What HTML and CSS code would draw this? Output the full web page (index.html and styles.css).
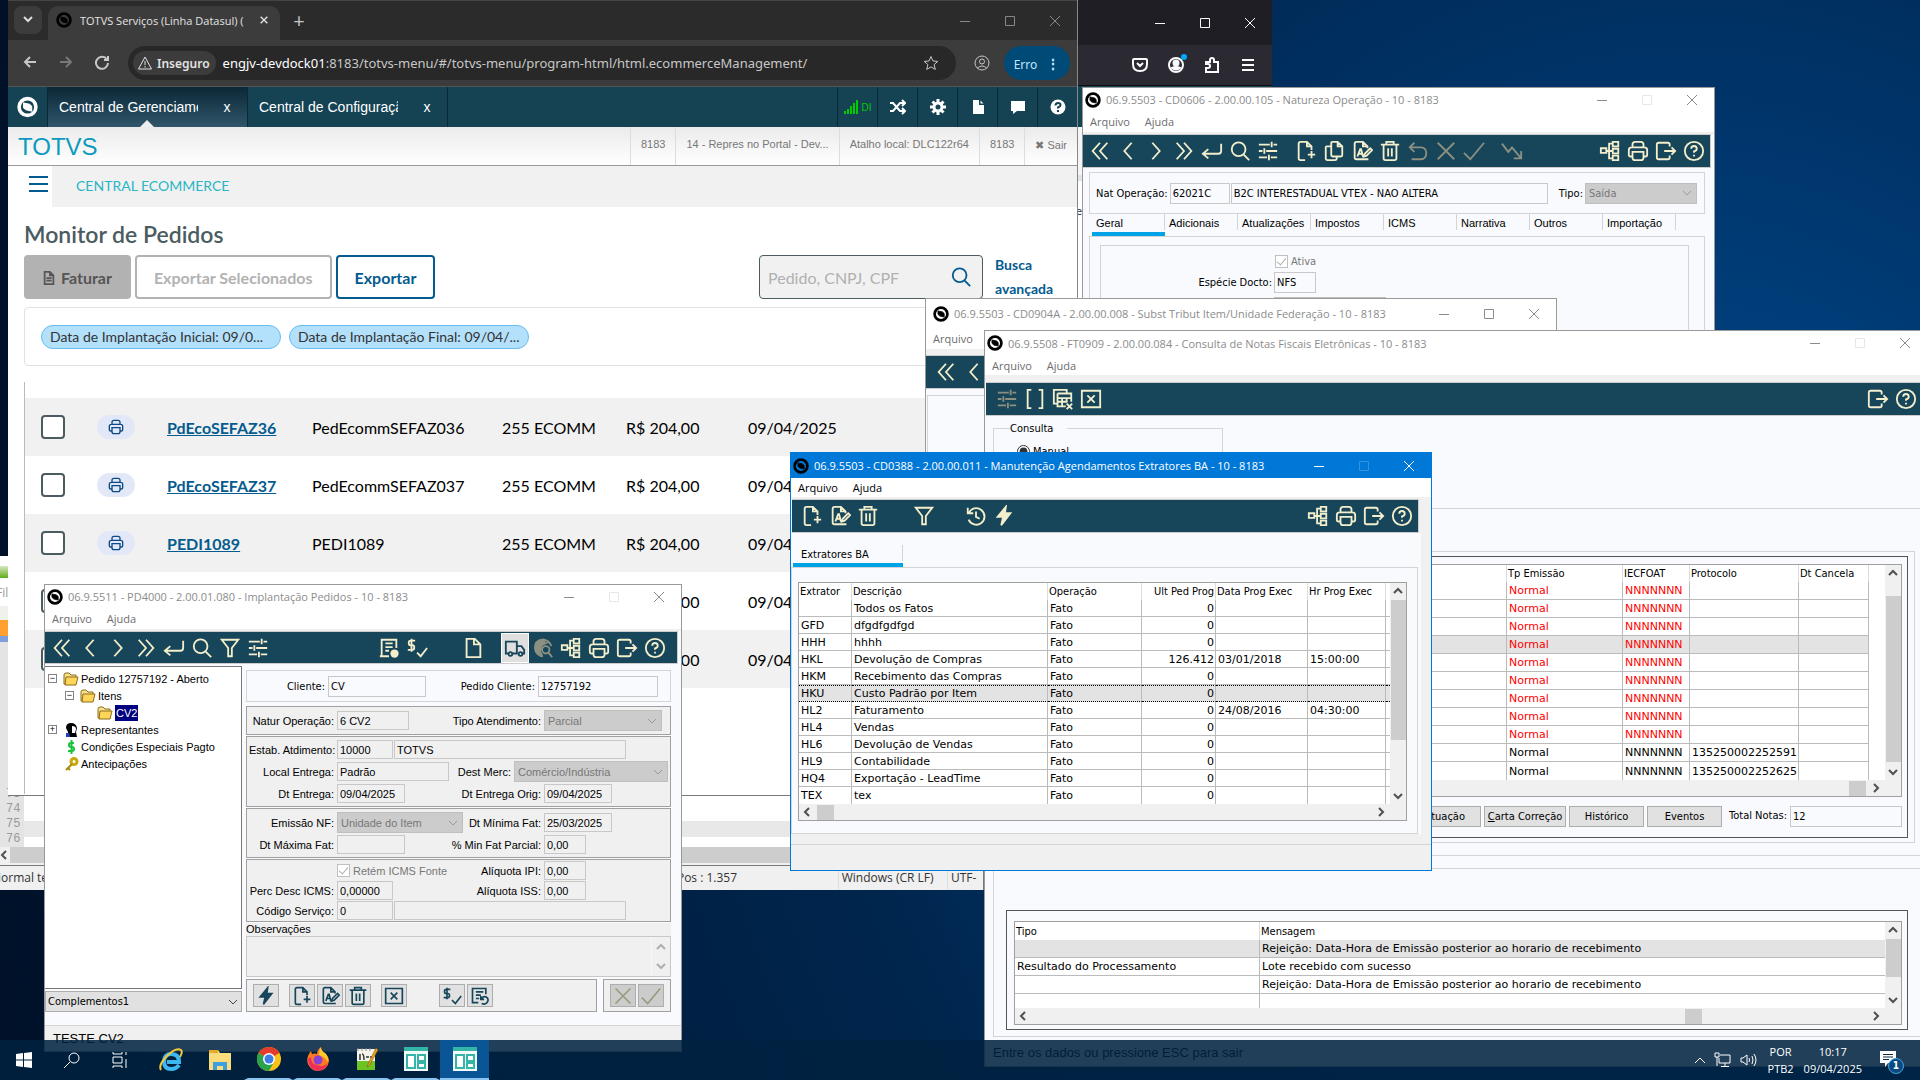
FILE: index.html
```
<!DOCTYPE html>
<html lang="pt-BR">
<head>
  <meta charset="utf-8">
  <meta name="viewport" content="width=device-width, initial-scale=1">
  <title>Central Ecommerce</title>
  <link rel="stylesheet" href="styles.css">
</head>
<body>

<!-- Icon sprite -->
<svg class="sprite" aria-hidden="true">
  <symbol id="logo" viewBox="0 0 20 20"><circle cx="10" cy="10" r="8" fill="none" stroke="currentColor" stroke-width="3.4"/><path d="M6.2 6.2l5.6 1.2 2.2 2v4.4L8.600 12.600 6.200 10.400z" fill="currentColor"/></symbol>
  <symbol id="first" viewBox="0 0 24 24"><path d="M12 3L4 12l8 9M20 3l-8 9 8 9"/></symbol>
  <symbol id="prev" viewBox="0 0 24 24"><path d="M16 3l-8 9 8 9"/></symbol>
  <symbol id="next" viewBox="0 0 24 24"><path d="M8 3l8 9-8 9"/></symbol>
  <symbol id="last" viewBox="0 0 24 24"><path d="M4 3l8 9-8 9M12 3l8 9-8 9"/></symbol>
  <symbol id="enter" viewBox="0 0 24 24"><path d="M22 4v8q0 3-3 3H3M8 10l-6 5 6 5"/></symbol>
  <symbol id="search" viewBox="0 0 24 24"><circle cx="10.500" cy="10" r="7.500"/><path d="M16 16l6 6"/></symbol>
  <symbol id="funnel" viewBox="0 0 24 24"><path d="M3 3h18l-7 9v9h-4v-9z"/></symbol>
  <symbol id="sliders" viewBox="0 0 24 24"><path d="M2 5h12M18 5h4M16 2v6M2 12h4M10 12h12M8 9v6M2 19h9M15 19h7M13 16v6"/></symbol>
  <symbol id="new" viewBox="0 0 24 24"><path d="M11 22H6q-2 0-2-2V4q0-2 2-2h7l5 5v4M13 2v5h5M18 12v8M14 16h8"/></symbol>
  <symbol id="copy" viewBox="0 0 24 24"><path d="M9 7H4q-1 0-1 1v12q0 2 2 2h8q2 0 2-2v-2M9 3q0-1 1-1h6l5 5v9q0 2-2 2h-8q-2 0-2-2zM16 2v5h5"/></symbol>
  <symbol id="edit" viewBox="0 0 24 24"><path d="M19 21H6q-2 0-2-2V4q0-2 2-2h7l5 5v2M13 2v5h4M7 18l3-8h1l2 8M8 15h4M14 18l1-3 6-6 2 2-6 6z"/></symbol>
  <symbol id="trash" viewBox="0 0 24 24"><path d="M2 5h20M8 5V2h8v3M5 5v15q0 2 2 2h10q2 0 2-2V5M10 9v9M14 9v9"/></symbol>
  <symbol id="undo" viewBox="0 0 24 24"><path d="M8 3L3 8l5 5M3 8h12q6 0 6 6.500T15 21H5"/></symbol>
  <symbol id="cross" viewBox="0 0 24 24"><path d="M3 3l18 18M21 3L3 21"/></symbol>
  <symbol id="check" viewBox="0 0 24 24"><path d="M1 14l7 7L23 3"/></symbol>
  <symbol id="trend" viewBox="0 0 24 24"><path d="M1 4l7 9 4-5 10 12M22 12v8h-8"/></symbol>
  <symbol id="tree" viewBox="0 0 24 24"><path d="M2 9h6v5H2zM15 2h6v5h-6zM15 9.500h6v5h-6zM15 17h6v5h-6zM8 12h7M15 4h-4v16h4"/></symbol>
  <symbol id="print" viewBox="0 0 24 24"><path d="M6 9V5q0-3 3-3h6q3 0 3 3v4M6 18H4q-2 0-2-2v-5q0-3 3-3h14q3 0 3 3v5q0 2-2 2h-2M6 13h12v6q0 3-3 3H9q-3 0-3-3z"/></symbol>
  <symbol id="exit" viewBox="0 0 24 24"><path d="M16 7V5q0-2-2-2H4Q2 3 2 5v14q0 2 2 2h10q2 0 2-2v-2M10 12h12M18 8l4 4-4 4"/></symbol>
  <symbol id="help" viewBox="0 0 24 24"><circle cx="12" cy="12" r="10"/><path d="M9 9.500q0-3 3-3t3 3q0 2-3 3v1.500M12 16v2"/></symbol>
  <symbol id="list" viewBox="0 0 24 24"><path d="M12 21H4V3h16v9M8 7h8M8 11h8M8 15h4M2 21h10"/><circle cx="18" cy="18" r="4.500" fill="currentColor" stroke="none"/></symbol>
  <symbol id="dollar" viewBox="0 0 24 24"><path d="M10 4H5q-2 0-2 2.500T5 9h2q2 0 2 2.500T7 14H2M6 2v14M12 17l4 4 7-9"/></symbol>
  <symbol id="file" viewBox="0 0 24 24"><path d="M5 2h9l6 6v14H5zM13 2v6h6"/></symbol>
  <symbol id="truck" viewBox="0 0 24 24"><path d="M5 18H2V5h12v13H9M14 10h5l3 4v4h-2"/><circle cx="7" cy="18.500" r="2"/><circle cx="18" cy="18.500" r="2"/></symbol>
  <symbol id="globe" viewBox="0 0 24 24"><path d="M12 21A9 9 0 1 1 21 10M4 8l6 2-2 5 3 5M9 4l5 3 5-2"/><path d="M4 7q4-5 9-4l1 4-5 3 1 3-2 3 1 4Q2 16 4 7z" fill="currentColor"/><circle cx="15" cy="14" r="4"/><path d="M18 17l4 5"/></symbol>
  <symbol id="clock" viewBox="0 0 24 24"><path d="M3 3v6h6M4 9a9 9 0 1 1 0 7M12 7v6l4 2"/></symbol>
  <symbol id="bolt" viewBox="0 0 24 24"><path d="M14 2L5 13h6l-2 9 10-13h-6z" fill="currentColor"/></symbol>
  <symbol id="brackets" viewBox="0 0 24 24"><path d="M8 2H4v20h4M16 2h4v20h-4"/></symbol>
  <symbol id="calc" viewBox="0 0 24 24"><path d="M5 17H2V2h14v3M6 6h15v9M6 6v14h9M6 11h15M11 11v9M16 11v4M6 15h11M16 17l6 6M22 17l-6 6"/></symbol>
  <symbol id="boxx" viewBox="0 0 24 24"><path d="M2 3h20v18H2zM8 8l8 8M16 8l-8 8"/></symbol>
  <symbol id="report" viewBox="0 0 24 24"><path d="M10 20H3V3h16v7M7 7h9M7 11h6M7 15h4M13 12v4h4M14 16q1-4 5-3 4 2 2 6t-7 2"/></symbol>
  <symbol id="up" viewBox="0 0 12 12"><path d="M2 8l4-4 4 4"/></symbol>
  <symbol id="down" viewBox="0 0 12 12"><path d="M2 4l4 4 4-4"/></symbol>
  <symbol id="left" viewBox="0 0 12 12"><path d="M8 2L4 6l4 4"/></symbol>
  <symbol id="right" viewBox="0 0 12 12"><path d="M4 2l4 4-4 4"/></symbol>
  <symbol id="min" viewBox="0 0 12 12"><path d="M1 6.500h10"/></symbol>
  <symbol id="max" viewBox="0 0 12 12"><path d="M1.500 1.500h9v9h-9z"/></symbol>
  <symbol id="close" viewBox="0 0 12 12"><path d="M1 1l10 10M11 1L1 11"/></symbol>
  <symbol id="folder" viewBox="0 0 16 14"><path d="M1 3q0-2 2-2h3l2 2h5v9H1z" fill="#fbe08a" stroke="#8a6d1a" stroke-width="1"/><path d="M3 5h12l-2 8H2z" fill="#ffd65a" stroke="#8a6d1a" stroke-width="1"/></symbol>
  <symbol id="app" viewBox="0 0 24 24"><path d="M0 0h24v24H0z" fill="#f3fbfa"/><path d="M0 0h24v4H0z" fill="#35b5a8"/><path d="M3 8h8v13H3zM14 8h7v6h-7zM14 16h7v5h-7z" fill="#fff" stroke="#35b5a8" stroke-width="2"/></symbol>
</svg>

<main class="desktop">

  <!-- Notepad++ -->
  <section class="window npp" aria-label="Notepad++">
    <div class="npp-title"><span class="npp-icon"></span></div>
    <div class="npp-menu">File</div>
    <div class="npp-tools"></div>
    <div class="npp-editor">
      <div class="npp-gutter"><span>73</span><span>74</span><span>75</span><span>76</span></div>
      <div class="npp-text"><div class="npp-current"></div></div>
    </div>
    <div class="npp-scroll"><svg class="ar"><use href="#left"/></svg><div class="npp-thumb"></div></div>
    <div class="npp-status">
      <span class="npp-mode">Normal te</span>
      <span class="npp-pos">Pos : 1.357</span>
      <span class="npp-eol">Windows (CR LF)</span>
      <span class="npp-enc">UTF-8</span>
    </div>
  </section>

  <!-- Firefox -->
  <section class="window firefox" aria-label="Firefox">
    <div class="ff-tabs">
      <button class="wc" aria-label="Minimizar"><svg><use href="#min"/></svg></button>
      <button class="wc" aria-label="Maximizar"><svg><use href="#max"/></svg></button>
      <button class="wc" aria-label="Fechar"><svg><use href="#close"/></svg></button>
    </div>
    <div class="ff-bar">
      <button aria-label="Pocket"><svg viewBox="0 0 16 16"><path d="M1 3q0-1 1-1h12q1 0 1 1v4q0 7-7 7T1 7zM5 6l3 3 3-3"/></svg></button>
      <button class="ff-account" aria-label="Conta"><svg viewBox="0 0 16 16"><circle cx="8" cy="8" r="7"/><circle cx="8" cy="6" r="2.500" fill="currentColor"/><path d="M4 11q4-2 8 0-4 3-8 0z" fill="currentColor"/></svg></button>
      <button aria-label="Extensões"><svg viewBox="0 0 16 16"><path d="M2 15V11h2q2 0 2-2T4 7H2V5h4V3q0-2 2-2t2 2v2h4v10z"/></svg></button>
      <button aria-label="Menu"><svg viewBox="0 0 16 16"><path d="M2 3h12M2 8h12M2 13h12"/></svg></button>
    </div>
    <div class="ff-teal"></div>
    <div class="ff-head"></div>
    <p class="ff-text">e</p>
  </section>

  <!-- Chrome -->
  <section class="window chrome" aria-label="Chrome">
    <header class="tabs">
      <button class="tab-search" aria-label="Pesquisar guias"><svg class="ar"><use href="#down"/></svg></button>
      <div class="tab">
        <svg class="favicon"><use href="#logo"/></svg>
        <span class="tab-name">TOTVS Serviços (Linha Datasul) (</span>
        <button class="tab-close" aria-label="Fechar guia"><svg><use href="#close"/></svg></button>
      </div>
      <button class="tab-new" aria-label="Nova guia">+</button>
      <div class="controls">
        <button class="wc" aria-label="Minimizar"><svg><use href="#min"/></svg></button>
        <button class="wc" aria-label="Maximizar"><svg><use href="#max"/></svg></button>
        <button class="wc" aria-label="Fechar"><svg><use href="#close"/></svg></button>
      </div>
    </header>
    <div class="urlbar">
      <button class="nav" aria-label="Voltar"><svg viewBox="0 0 16 16"><path d="M14 8H3M8 3L3 8l5 5"/></svg></button>
      <button class="nav off" aria-label="Avançar"><svg viewBox="0 0 16 16"><path d="M2 8h11M8 3l5 5-5 5"/></svg></button>
      <button class="nav" aria-label="Recarregar"><svg viewBox="0 0 16 16"><path d="M13 5.500A6 6 0 1 0 14 9M14 2v4h-4"/></svg></button>
      <div class="url">
        <button class="unsafe"><svg viewBox="0 0 16 16"><path d="M8 2l6.500 12h-13zM8 6v4M8 11v1.500"/></svg>Inseguro</button>
        <span class="address"><b>engjv-devdock01</b>:8183/totvs-menu/#/totvs-menu/program-html/html.ecommerceManagement/</span>
        <svg class="star" viewBox="0 0 16 16"><path d="M8 1.500l2 4.500 4.800.4-3.700 3.200 1.200 4.800L8 11.900l-4.300 2.500 1.200-4.800L1.200 6.400 6 6z"/></svg>
      </div>
      <svg class="profile" viewBox="0 0 16 16"><circle cx="8" cy="8" r="7"/><circle cx="8" cy="6.500" r="2.500"/><path d="M3.500 13q4.500-4 9 0"/></svg>
      <button class="erro">Erro <span>⋮</span></button>
    </div>

    <nav class="totvs-bar">
      <svg class="totvs-logo"><use href="#logo"/></svg>
      <div class="ttab active"><span>Central de Gerenciamento</span><button aria-label="Fechar">x</button></div>
      <div class="ttab"><span>Central de Configuração</span><button aria-label="Fechar">x</button></div>
      <div class="tbuttons">
        <button class="signal" aria-label="Sinal"><svg viewBox="0 0 14 14"><path d="M0 11h2v3H0zM3 9h2v5H3zM6 6h2v8H6zM9 3h2v11H9zM12 0h2v14h-2z" fill="currentColor"/></svg>DI</button>
        <button aria-label="Alternar"><svg viewBox="0 0 16 16"><path d="M0 4h3l7 8h4M0 12h3l7-8h4M12 1l3 3-3 3M12 9l3 3-3 3"/></svg></button>
        <button aria-label="Configurações"><svg viewBox="0 0 16 16"><circle cx="8" cy="8" r="4" stroke-width="3"/><path d="M8 0v3M8 13v3M0 8h3M13 8h3M2.500 2.500l2 2M11.500 11.500l2 2M2.500 13.500l2-2M11.500 4.500l2-2" stroke-width="3"/></svg></button>
        <button aria-label="Documento"><svg viewBox="0 0 16 16"><path d="M3 1h6v5h5v9H3zM10.500 1.500l3 3h-3z" fill="currentColor" stroke="none"/></svg></button>
        <button aria-label="Mensagens"><svg viewBox="0 0 16 16"><path d="M1 2h14v10H7l-4 3v-3H1z" fill="currentColor" stroke="none"/></svg></button>
        <button aria-label="Ajuda"><svg viewBox="0 0 16 16"><circle cx="8" cy="8" r="7.500" fill="#fff" stroke="none"/><path d="M5.500 6.500q0-2.500 2.500-2.500t2.500 2q0 1.500-2.500 2.500v1M8 11v2" stroke="#154354"/></svg></button>
      </div>
    </nav>
    <div class="totvs-head">
      <strong class="brand">TOTVS</strong>
      <span class="hcell">8183</span>
      <span class="hcell">14 - Repres no Portal - Dev...</span>
      <span class="hcell">Atalho local: DLC122r64</span>
      <span class="hcell">8183</span>
      <a class="hcell" href="#sair">✖ Sair</a>
    </div>
    <div class="crumb">
      <button class="burger" aria-label="Menu"><i></i><i></i><i></i></button>
      <span>CENTRAL ECOMMERCE</span>
    </div>

    <div class="page">
      <h1>Monitor de Pedidos</h1>
      <div class="actions">
        <button class="po faturar"><svg viewBox="0 0 12 16"><path d="M1 1h6l4 4v10H1zM7 1v4h4M3 8h6M3 11h6"/></svg>Faturar</button>
        <button class="po disabled" disabled>Exportar Selecionados</button>
        <button class="po">Exportar</button>
        <div class="search-box">
          <input type="text" placeholder="Pedido, CNPJ, CPF" aria-label="Pesquisa">
          <button aria-label="Pesquisar"><svg class="ic"><use href="#search"/></svg></button>
        </div>
        <a class="advanced" href="#busca">Busca avançada</a>
      </div>
      <div class="chips">
        <span class="chip">Data de Implantação Inicial: 09/0...</span>
        <span class="chip">Data de Implantação Final: 09/04/...</span>
      </div>
      <div class="orders-wrap">
        <table class="orders">
          <colgroup><col class="o1"><col class="o2"><col class="o3"><col class="o4"><col class="o5"><col class="o6"><col></colgroup>
          <tr>
            <td><input type="checkbox" aria-label="Selecionar PdEcoSEFAZ36"></td>
            <td><button class="pill" aria-label="Imprimir"><svg class="ic"><use href="#print"/></svg></button></td>
            <td><a href="#p36">PdEcoSEFAZ36</a></td><td>PedEcommSEFAZ036</td><td>255 ECOMM</td><td>R$ 204,00</td><td>09/04/2025</td>
          </tr>
          <tr>
            <td><input type="checkbox" aria-label="Selecionar PdEcoSEFAZ37"></td>
            <td><button class="pill" aria-label="Imprimir"><svg class="ic"><use href="#print"/></svg></button></td>
            <td><a href="#p37">PdEcoSEFAZ37</a></td><td>PedEcommSEFAZ037</td><td>255 ECOMM</td><td>R$ 204,00</td><td>09/04/2025</td>
          </tr>
          <tr>
            <td><input type="checkbox" aria-label="Selecionar PEDI1089"></td>
            <td><button class="pill" aria-label="Imprimir"><svg class="ic"><use href="#print"/></svg></button></td>
            <td><a href="#p1089">PEDI1089</a></td><td>PEDI1089</td><td>255 ECOMM</td><td>R$ 204,00</td><td>09/04/2025</td>
          </tr>
          <tr>
            <td><input type="checkbox" aria-label="Selecionar"></td><td></td><td></td><td></td><td></td><td>R$ 204,00</td><td>09/04/2025</td>
          </tr>
          <tr>
            <td><input type="checkbox" aria-label="Selecionar"></td><td></td><td></td><td></td><td></td><td>R$ 204,00</td><td>09/04/2025</td>
          </tr>
        </table>
      </div>
    </div>
  </section>

  <!-- CD0606 -->
  <section class="window erp cd0606">
    <header class="title">
      <svg class="mark"><use href="#logo"/></svg>
      <span>06.9.5503 - CD0606 - 2.00.00.105 - Natureza Operação - 10 - 8183</span>
      <div class="controls">
        <button class="wc" aria-label="Minimizar"><svg><use href="#min"/></svg></button>
        <button class="wc off" aria-label="Maximizar" disabled><svg><use href="#max"/></svg></button>
        <button class="wc" aria-label="Fechar"><svg><use href="#close"/></svg></button>
      </div>
    </header>
    <nav class="menu"><a href="#arquivo">Arquivo</a><a href="#ajuda">Ajuda</a></nav>
    <div class="toolbar">
      <button aria-label="Primeiro"><svg class="ic"><use href="#first"/></svg></button>
      <button aria-label="Anterior"><svg class="ic"><use href="#prev"/></svg></button>
      <button aria-label="Próximo"><svg class="ic"><use href="#next"/></svg></button>
      <button aria-label="Último"><svg class="ic"><use href="#last"/></svg></button>
      <button aria-label="Vá para"><svg class="ic"><use href="#enter"/></svg></button>
      <button aria-label="Pesquisa"><svg class="ic"><use href="#search"/></svg></button>
      <button aria-label="Parâmetros"><svg class="ic"><use href="#sliders"/></svg></button>
      <i class="gap-s"></i>
      <button aria-label="Incluir"><svg class="ic"><use href="#new"/></svg></button>
      <button aria-label="Copiar"><svg class="ic"><use href="#copy"/></svg></button>
      <button aria-label="Modificar"><svg class="ic"><use href="#edit"/></svg></button>
      <button aria-label="Eliminar"><svg class="ic"><use href="#trash"/></svg></button>
      <button class="off" aria-label="Desfazer" disabled><svg class="ic"><use href="#undo"/></svg></button>
      <button class="off" aria-label="Cancelar" disabled><svg class="ic"><use href="#cross"/></svg></button>
      <button class="off" aria-label="Confirmar" disabled><svg class="ic"><use href="#check"/></svg></button>
      <i class="gap-s"></i>
      <button class="off" aria-label="Evolução" disabled><svg class="ic"><use href="#trend"/></svg></button>
      <i class="push"></i>
      <button aria-label="Relacionados"><svg class="ic"><use href="#tree"/></svg></button>
      <button aria-label="Imprimir"><svg class="ic"><use href="#print"/></svg></button>
      <button aria-label="Sair"><svg class="ic"><use href="#exit"/></svg></button>
      <button aria-label="Ajuda"><svg class="ic"><use href="#help"/></svg></button>
    </div>
    <div class="body">
      <div class="panel key">
        <label for="nat">Nat Operação:</label>
        <input id="nat" class="fld w60" value="62021C">
        <input class="fld grow" value="B2C INTERESTADUAL VTEX - NAO ALTERA" aria-label="Descrição">
        <label class="tipo" for="tipo">Tipo:</label>
        <select id="tipo" class="sel w112" disabled><option>Saída</option></select>
      </div>
      <div class="folder-tabs">
        <button class="on">Geral</button><button>Adicionais</button><button>Atualizações</button><button>Impostos</button><button>ICMS</button><button>Narrativa</button><button>Outros</button><button>Importação</button>
      </div>
      <div class="panel geral">
        <div class="panel inner">
          <label class="chk"><input type="checkbox" checked disabled>Ativa</label>
          <div class="line"><label for="esp">Espécie Docto:</label><input id="esp" class="fld w42" value="NFS"></div>
          <div class="line"><label for="esp2"></label><select id="esp2" class="sel w112" disabled aria-label="Tipo"><option></option></select></div>
        </div>
      </div>
    </div>
  </section>

  <!-- CD0904A -->
  <section class="window erp cd0904">
    <header class="title">
      <svg class="mark"><use href="#logo"/></svg>
      <span>06.9.5503 - CD0904A - 2.00.00.008 - Subst Tribut Item/Unidade Federação - 10 - 8183</span>
      <div class="controls">
        <button class="wc" aria-label="Minimizar"><svg><use href="#min"/></svg></button>
        <button class="wc" aria-label="Maximizar"><svg><use href="#max"/></svg></button>
        <button class="wc" aria-label="Fechar"><svg><use href="#close"/></svg></button>
      </div>
    </header>
    <nav class="menu"><a href="#arquivo">Arquivo</a></nav>
    <div class="toolbar">
      <button aria-label="Primeiro"><svg class="ic"><use href="#first"/></svg></button>
      <button aria-label="Anterior"><svg class="ic"><use href="#prev"/></svg></button>
    </div>
    <div class="body"><div class="panel fill"></div></div>
  </section>

  <!-- FT0909 -->
  <section class="window erp ft0909">
    <header class="title">
      <svg class="mark"><use href="#logo"/></svg>
      <span>06.9.5508 - FT0909 - 2.00.00.084 - Consulta de Notas Fiscais Eletrônicas - 10 - 8183</span>
      <div class="controls">
        <button class="wc" aria-label="Minimizar"><svg><use href="#min"/></svg></button>
        <button class="wc off" aria-label="Maximizar" disabled><svg><use href="#max"/></svg></button>
        <button class="wc" aria-label="Fechar"><svg><use href="#close"/></svg></button>
      </div>
    </header>
    <nav class="menu"><a href="#arquivo">Arquivo</a><a href="#ajuda">Ajuda</a></nav>
    <div class="toolbar">
      <button class="off" aria-label="Parâmetros" disabled><svg class="ic"><use href="#sliders"/></svg></button>
      <button aria-label="Faixa"><svg class="ic"><use href="#brackets"/></svg></button>
      <button aria-label="Planilha"><svg class="ic"><use href="#calc"/></svg></button>
      <button aria-label="Cancelar"><svg class="ic"><use href="#boxx"/></svg></button>
      <i class="push"></i>
      <button aria-label="Sair"><svg class="ic"><use href="#exit"/></svg></button>
      <button aria-label="Ajuda"><svg class="ic"><use href="#help"/></svg></button>
    </div>
    <div class="body">
      <fieldset class="consulta">
        <legend>Consulta</legend>
        <label><input type="radio" name="consulta" checked>Manual</label>
      </fieldset>
      <div class="panel notas">
        <div class="panel notas-in">
          <div class="panel dark">
            <div class="browse">
              <table class="grid ft-grid">
                <colgroup><col><col class="f1"><col class="f2"><col class="f3"><col class="f4"><col class="f5"></colgroup>
                <thead><tr><th></th><th>Tp Emissão</th><th>IECFOAT</th><th>Protocolo</th><th>Dt Cancela</th><th></th></tr></thead>
                <tbody>
                  <tr class="red"><td></td><td>Normal</td><td>NNNNNNN</td><td></td><td></td><td></td></tr>
                  <tr class="red"><td></td><td>Normal</td><td>NNNNNNN</td><td></td><td></td><td></td></tr>
                  <tr class="red"><td></td><td>Normal</td><td>NNNNNNN</td><td></td><td></td><td></td></tr>
                  <tr class="red cur"><td></td><td>Normal</td><td>NNNNNNN</td><td></td><td></td><td></td></tr>
                  <tr class="red"><td></td><td>Normal</td><td>NNNNNNN</td><td></td><td></td><td></td></tr>
                  <tr class="red"><td></td><td>Normal</td><td>NNNNNNN</td><td></td><td></td><td></td></tr>
                  <tr class="red"><td></td><td>Normal</td><td>NNNNNNN</td><td></td><td></td><td></td></tr>
                  <tr class="red"><td></td><td>Normal</td><td>NNNNNNN</td><td></td><td></td><td></td></tr>
                  <tr class="red"><td></td><td>Normal</td><td>NNNNNNN</td><td></td><td></td><td></td></tr>
                  <tr><td></td><td>Normal</td><td>NNNNNNN</td><td>135250002252591</td><td></td><td></td></tr>
                  <tr><td></td><td>Normal</td><td>NNNNNNN</td><td>135250002252625</td><td></td><td></td></tr>
                </tbody>
              </table>
              <div class="vs"><svg class="ar"><use href="#up"/></svg><i class="th ft-th"></i><svg class="ar end"><use href="#down"/></svg></div>
              <div class="hs"><svg class="ar"><use href="#left"/></svg><i class="th end"></i><svg class="ar"><use href="#right"/></svg></div>
            </div>
            <div class="ft-buttons">
              <button class="w75">Situação</button>
              <button class="w82"><u>C</u>arta Correção</button>
              <button class="w75">Histórico</button>
              <button class="w75">Eventos</button>
              <label for="total">Total Notas:</label>
              <input id="total" class="fld w112" value="12">
            </div>
          </div>
        </div>
      </div>
      <div class="panel msgs">
        <div class="panel dark">
          <div class="browse">
            <table class="grid msg-grid">
              <colgroup><col class="m1"><col></colgroup>
              <thead><tr><th>Tipo</th><th>Mensagem</th></tr></thead>
              <tbody>
                <tr class="cur"><td></td><td>Rejeição: Data-Hora de Emissão posterior ao horario de recebimento</td></tr>
                <tr><td>Resultado do Processamento</td><td>Lote recebido com sucesso</td></tr>
                <tr><td></td><td>Rejeição: Data-Hora de Emissão posterior ao horario de recebimento</td></tr>
                <tr class="short"><td></td><td></td></tr>
              </tbody>
            </table>
            <div class="vs"><svg class="ar"><use href="#up"/></svg><i class="th msg-th"></i><svg class="ar end"><use href="#down"/></svg></div>
            <div class="hs msg-hs"><svg class="ar"><use href="#left"/></svg><i class="th end"></i><svg class="ar"><use href="#right"/></svg></div>
          </div>
        </div>
      </div>
    </div>
    <footer class="ft-status">Entre os dados ou pressione ESC para sair</footer>
  </section>

  <!-- CD0388 -->
  <section class="window erp cd0388">
    <header class="title">
      <svg class="mark"><use href="#logo"/></svg>
      <span>06.9.5503 - CD0388 - 2.00.00.011 - Manutenção Agendamentos Extratores BA - 10 - 8183</span>
      <div class="controls">
        <button class="wc" aria-label="Minimizar"><svg><use href="#min"/></svg></button>
        <button class="wc off" aria-label="Maximizar" disabled><svg><use href="#max"/></svg></button>
        <button class="wc" aria-label="Fechar"><svg><use href="#close"/></svg></button>
      </div>
    </header>
    <nav class="menu"><a href="#arquivo">Arquivo</a><a href="#ajuda">Ajuda</a></nav>
    <div class="toolbar">
      <button aria-label="Incluir"><svg class="ic"><use href="#new"/></svg></button>
      <button aria-label="Modificar"><svg class="ic"><use href="#edit"/></svg></button>
      <button aria-label="Eliminar"><svg class="ic"><use href="#trash"/></svg></button>
      <i class="gap-m"></i>
      <button aria-label="Filtro"><svg class="ic"><use href="#funnel"/></svg></button>
      <i class="gap-l"></i>
      <button aria-label="Histórico"><svg class="ic"><use href="#clock"/></svg></button>
      <button aria-label="Executar"><svg class="ic"><use href="#bolt"/></svg></button>
      <i class="push"></i>
      <button aria-label="Relacionados"><svg class="ic"><use href="#tree"/></svg></button>
      <button aria-label="Imprimir"><svg class="ic"><use href="#print"/></svg></button>
      <button aria-label="Sair"><svg class="ic"><use href="#exit"/></svg></button>
      <button aria-label="Ajuda"><svg class="ic"><use href="#help"/></svg></button>
    </div>
    <div class="body">
      <div class="folder-tabs wide"><button class="on">Extratores BA</button></div>
      <div class="panel extratores">
        <div class="browse">
          <table class="grid ba-grid">
            <colgroup><col class="b1"><col><col class="b3"><col class="b4"><col class="b5"><col class="b6"><col class="b7"></colgroup>
            <thead><tr><th>Extrator</th><th>Descrição</th><th>Operação</th><th class="num">Ult Ped Prog</th><th>Data Prog Exec</th><th>Hr Prog Exec</th><th></th></tr></thead>
            <tbody>
              <tr><td></td><td>Todos os Fatos</td><td>Fato</td><td class="num">0</td><td></td><td></td><td></td></tr>
              <tr><td>GFD</td><td>dfgdfgdfgd</td><td>Fato</td><td class="num">0</td><td></td><td></td><td></td></tr>
              <tr><td>HHH</td><td>hhhh</td><td>Fato</td><td class="num">0</td><td></td><td></td><td></td></tr>
              <tr><td>HKL</td><td>Devolução de Compras</td><td>Fato</td><td class="num">126.412</td><td>03/01/2018</td><td>15:00:00</td><td></td></tr>
              <tr><td>HKM</td><td>Recebimento das Compras</td><td>Fato</td><td class="num">0</td><td></td><td></td><td></td></tr>
              <tr class="cur focus"><td>HKU</td><td>Custo Padrão por Item</td><td>Fato</td><td class="num">0</td><td></td><td></td><td></td></tr>
              <tr><td>HL2</td><td>Faturamento</td><td>Fato</td><td class="num">0</td><td>24/08/2016</td><td>04:30:00</td><td></td></tr>
              <tr><td>HL4</td><td>Vendas</td><td>Fato</td><td class="num">0</td><td></td><td></td><td></td></tr>
              <tr><td>HL6</td><td>Devolução de Vendas</td><td>Fato</td><td class="num">0</td><td></td><td></td><td></td></tr>
              <tr><td>HL9</td><td>Contabilidade</td><td>Fato</td><td class="num">0</td><td></td><td></td><td></td></tr>
              <tr><td>HQ4</td><td>Exportação - LeadTime</td><td>Fato</td><td class="num">0</td><td></td><td></td><td></td></tr>
              <tr><td>TEX</td><td>tex</td><td>Fato</td><td class="num">0</td><td></td><td></td><td></td></tr>
            </tbody>
          </table>
          <div class="vs"><svg class="ar"><use href="#up"/></svg><i class="th ba-th"></i><svg class="ar end"><use href="#down"/></svg></div>
          <div class="hs"><svg class="ar"><use href="#left"/></svg><i class="th"></i><svg class="ar end"><use href="#right"/></svg></div>
        </div>
      </div>
    </div>
    <footer class="ba-status"></footer>
  </section>

  <!-- PD4000 -->
  <section class="window erp pd4000">
    <header class="title">
      <svg class="mark"><use href="#logo"/></svg>
      <span>06.9.5511 - PD4000 - 2.00.01.080 - Implantação Pedidos - 10 - 8183</span>
      <div class="controls">
        <button class="wc" aria-label="Minimizar"><svg><use href="#min"/></svg></button>
        <button class="wc off" aria-label="Maximizar" disabled><svg><use href="#max"/></svg></button>
        <button class="wc" aria-label="Fechar"><svg><use href="#close"/></svg></button>
      </div>
    </header>
    <nav class="menu"><a href="#arquivo">Arquivo</a><a href="#ajuda">Ajuda</a></nav>
    <div class="toolbar">
      <button aria-label="Primeiro"><svg class="ic"><use href="#first"/></svg></button>
      <button aria-label="Anterior"><svg class="ic"><use href="#prev"/></svg></button>
      <button aria-label="Próximo"><svg class="ic"><use href="#next"/></svg></button>
      <button aria-label="Último"><svg class="ic"><use href="#last"/></svg></button>
      <button aria-label="Vá para"><svg class="ic"><use href="#enter"/></svg></button>
      <button aria-label="Pesquisa"><svg class="ic"><use href="#search"/></svg></button>
      <button aria-label="Filtro"><svg class="ic"><use href="#funnel"/></svg></button>
      <button aria-label="Parâmetros"><svg class="ic"><use href="#sliders"/></svg></button>
      <i class="push"></i>
      <button aria-label="Lista"><svg class="ic"><use href="#list"/></svg></button>
      <button aria-label="Preço"><svg class="ic"><use href="#dollar"/></svg></button>
      <i class="gap-m"></i>
      <button aria-label="Documento"><svg class="ic"><use href="#file"/></svg></button>
      <i class="gap-d"></i>
      <button class="pressed" aria-label="Entrega"><svg class="ic"><use href="#truck"/></svg></button>
      <button class="off" aria-label="Consulta" disabled><svg class="ic"><use href="#globe"/></svg></button>
      <button aria-label="Relacionados"><svg class="ic"><use href="#tree"/></svg></button>
      <button aria-label="Imprimir"><svg class="ic"><use href="#print"/></svg></button>
      <button aria-label="Sair"><svg class="ic"><use href="#exit"/></svg></button>
      <button aria-label="Ajuda"><svg class="ic"><use href="#help"/></svg></button>
    </div>
    <div class="pd-body">
      <div class="pd-left">
        <ul class="pd-tree">
          <li><i class="box">−</i><svg class="fo"><use href="#folder"/></svg>Pedido 12757192 - Aberto</li>
          <li class="l2"><i class="box">−</i><svg class="fo"><use href="#folder"/></svg>Itens</li>
          <li class="l3"><svg class="fo"><use href="#folder"/></svg><mark>CV2</mark></li>
          <li><i class="box">+</i><svg class="fo" viewBox="0 0 16 14"><path d="M5 14V9L3 5q0-5 5-5t6 5l-1 4 1 5z" fill="#000"/><path d="M9 3q4 0 4 3l-1 4H9z" fill="#fff"/><path d="M3 14v-4h3l1 4z" fill="#2040c0"/></svg>Representantes</li>
          <li class="leaf"><svg class="fo" viewBox="0 0 16 14"><path d="M11 3H7.500Q6 3 6 5t2 2h1q2 0 2 2t-2 2H5M8.500 0v14" fill="none" stroke="#19c33c" stroke-width="2"/></svg>Condições Especiais Pagto</li>
          <li class="leaf"><svg class="fo" viewBox="0 0 16 14"><circle cx="11" cy="4.500" r="3" fill="none" stroke="#c9a80c" stroke-width="3"/><path d="M9 7l-6 6M5 11l2 2" stroke="#a88a08" stroke-width="2"/></svg>Antecipações</li>
        </ul>
        <select class="comp" aria-label="Complementos"><option>Complementos1</option></select>
      </div>
      <div class="pd-form">
        <div class="panel pd-key">
          <label class="l" for="cli">Cliente:</label><input id="cli" class="fld w98" value="CV">
          <label class="r" for="pedcli">Pedido Cliente:</label><input id="pedcli" class="fld w120" value="12757192">
        </div>
        <div class="box3d">
          <div class="row"><label class="l" for="nop">Natur Operação:</label><input id="nop" class="fl w72" value="6 CV2"><label class="r" for="tat">Tipo Atendimento:</label><div class="rc"><select id="tat" class="sel w118" disabled><option>Parcial</option></select></div></div>
        </div>
        <div class="box3d">
          <div class="row"><label class="l" for="est">Estab. Atdimento:</label><input id="est" class="fl w56" value="10000"><input class="fl w232" value="TOTVS" aria-label="Estabelecimento"></div>
          <div class="row"><label class="l" for="loc">Local Entrega:</label><input id="loc" class="fl w112" value="Padrão"><label class="r" for="dest">Dest Merc:</label><div class="rc wide"><select id="dest" class="sel w154" disabled><option>Comércio/Indústria</option></select></div></div>
          <div class="row"><label class="l" for="dte">Dt Entrega:</label><input id="dte" class="fl w68" value="09/04/2025"><label class="r" for="dto">Dt Entrega Orig:</label><div class="rc"><input id="dto" class="fl w68" value="09/04/2025"></div></div>
        </div>
        <div class="box3d">
          <div class="row"><label class="l" for="enf">Emissão NF:</label><select id="enf" class="sel w126" disabled><option>Unidade do Item</option></select><label class="r" for="dmi">Dt Mínima Fat:</label><div class="rc"><input id="dmi" class="fl w68" value="25/03/2025"></div></div>
          <div class="row"><label class="l" for="dma">Dt Máxima Fat:</label><input id="dma" class="fl w68"><label class="r" for="pmf">% Min Fat Parcial:</label><div class="rc"><input id="pmf" class="fl w42" value="0,00"></div></div>
        </div>
        <div class="box3d tight">
          <div class="row"><span class="l"></span><label class="chk"><input type="checkbox" checked disabled>Retém ICMS Fonte</label><label class="r" for="ipi">Alíquota IPI:</label><div class="rc"><input id="ipi" class="fl w42" value="0,00"></div></div>
          <div class="row"><label class="l" for="pdi">Perc Desc ICMS:</label><input id="pdi" class="fl w56" value="0,00000"><label class="r" for="iss">Alíquota ISS:</label><div class="rc"><input id="iss" class="fl w42" value="0,00"></div></div>
          <div class="row"><label class="l" for="cod">Código Serviço:</label><input id="cod" class="fl w56" value="0"><input class="fl w232" aria-label="Serviço"></div>
        </div>
        <label class="obs" for="obs">Observações</label>
        <div class="obs-box"><textarea id="obs"></textarea><div class="obs-sc"><svg class="ar"><use href="#up"/></svg><svg class="ar"><use href="#down"/></svg></div></div>
        <div class="pd-buttons">
          <div class="box3d grow">
            <button aria-label="Executar"><svg class="ic"><use href="#bolt"/></svg></button>
            <i class="gap-x"></i>
            <button aria-label="Incluir"><svg class="ic"><use href="#new"/></svg></button>
            <button aria-label="Modificar"><svg class="ic"><use href="#edit"/></svg></button>
            <button aria-label="Eliminar"><svg class="ic"><use href="#trash"/></svg></button>
            <i class="gap-x"></i>
            <button aria-label="Cancelar"><svg class="ic"><use href="#boxx"/></svg></button>
            <i class="gap-m"></i>
            <button aria-label="Preço"><svg class="ic"><use href="#dollar"/></svg></button>
            <button aria-label="Relatório"><svg class="ic"><use href="#report"/></svg></button>
          </div>
          <div class="box3d">
            <button class="off" disabled aria-label="Desfazer"><svg class="ic"><use href="#cross"/></svg></button>
            <button class="off" disabled aria-label="Salvar"><svg class="ic"><use href="#check"/></svg></button>
          </div>
        </div>
      </div>
    </div>
    <footer class="pd-status">TESTE CV2</footer>
  </section>

  <!-- Taskbar -->
  <footer class="taskbar">
    <button aria-label="Iniciar"><svg width="16" height="16" viewBox="0 0 16 16"><path d="M0 2l7-1v6.500H0zM8 1l8-1v7.500H8zM0 8.500h7V15l-7-1zM8 8.500h8V16l-8-1z" fill="#fff"/></svg></button>
    <button aria-label="Pesquisar"><svg class="line-ic" width="18" height="18" viewBox="0 0 18 18"><circle cx="11" cy="7" r="5"/><path d="M7 11l-6 6"/></svg></button>
    <button aria-label="Visão de tarefas"><svg class="line-ic" width="18" height="18" viewBox="0 0 18 18"><path d="M2 1v2h9V1M2 6h9v6H2zM2 17v-2h9v2M15 1v3M15 8v9"/></svg></button>
    <div class="apps">
      <button aria-label="Internet Explorer"><svg width="24" height="24" viewBox="0 0 24 24"><path d="M20 17q-3 4-7.500 4Q5 21 5 13.500T12.500 6 20 14H8" fill="none" stroke="#3cb8f0" stroke-width="4"/><path d="M2 22Q-1 17 8 8T22 2q2 2-1 7" fill="none" stroke="#f5c93a" stroke-width="2"/></svg></button>
      <button aria-label="Explorador"><svg width="24" height="22" viewBox="0 0 24 22"><path d="M1 1h9l2 3h11v17H1z" fill="#fbdc7c"/><path d="M1 1h9v3H1z" fill="#e8a92c"/><path d="M5 13h14v8h-4v-4H9v4H5z" fill="#3c9fe0"/></svg></button>
      <button class="open" aria-label="Chrome"><svg width="24" height="24" viewBox="0 0 24 24"><circle cx="12" cy="12" r="12" fill="#fbc116"/><path d="M12 12L1.600 6A12 12 0 0 1 22.400 6z" fill="#e33b2e"/><path d="M12 12L1.600 6A12 12 0 0 0 12 24l5-9z" fill="#2ba24c"/><circle cx="12" cy="12" r="6" fill="#fff"/><circle cx="12" cy="12" r="4.500" fill="#3f7de8"/></svg></button>
      <button class="open" aria-label="Firefox"><svg width="24" height="24" viewBox="0 0 24 24"><path d="M12 24A11 11 0 0 1 2 9q1-3 3-5l1 3q3-1 5 0Q11 3 15 0q0 4 4 6 4 4 4 8a11 11 0 0 1-11 10z" fill="#ff7a1f"/><path d="M15 0q0 4 4 6 4 4 3 9-3-5-9-7 0-5 2-8z" fill="#ffca2e"/><path d="M2 12q0 9 9 12 8 0 11-8-5 5-11 2-6-1-6-8z" fill="#ef2f58"/><circle cx="12" cy="13" r="4.500" fill="#8a3fd6"/></svg></button>
      <button class="open" aria-label="Notepad++"><svg width="22" height="24" viewBox="0 0 22 24"><path d="M1 2h18v21H1z" fill="#f4f4ec"/><path d="M1 14h18v9H1z" fill="#6cc424"/><path d="M2 1v3M6 1v3M10 1v3M14 1v3" stroke="#888"/><path d="M4 7v6M6 7q2 0 2 6M10 10h3M14 10h3" stroke="#333" stroke-width="1.500" fill="none"/><path d="M20 1l2 2-9 16-2 1 1-3z" fill="#e8a51e" stroke="#84560a" stroke-width=".6"/></svg></button>
      <button class="open" aria-label="Datasul"><svg width="24" height="24"><use href="#app"/></svg></button>
      <button class="open active" aria-label="Datasul"><svg width="24" height="24"><use href="#app"/></svg></button>
    </div>
    <div class="tray">
      <svg class="line-ic" width="12" height="12" viewBox="0 0 12 12"><path d="M1 9l5-5 5 5"/></svg>
      <svg class="line-ic" width="18" height="16" viewBox="0 0 18 16"><path d="M6 3h10v8H5V6M11 11v3M7 14.500h8M1 1h4v4H1zM3 5v9"/></svg>
      <svg class="line-ic" width="18" height="16" viewBox="0 0 18 16"><path d="M1 6v4h2l4 3V3L3 6zM9 6q1 2 0 4M12 4q2 4 0 8M14 2q4 6 0 12"/></svg>
      <span class="tray-text">POR<br>PTB2</span>
      <span class="tray-text clock">10:17<br>09/04/2025</span>
      <div class="notify"><svg width="16" height="16" viewBox="0 0 16 16"><path d="M0 0h16v12H8l-3 4v-4H0z" fill="#fff"/><path d="M3 3.500h10M3 6h10M3 8.500h6" stroke="#0a2a45"/></svg><b>1</b></div>
    </div>
  </footer>
</main>
</body>
</html>
```
FILE: styles.css
```
* {
  box-sizing: border-box;
}

body {
  margin: 0;
  font-family: "DejaVu Sans Condensed", "Liberation Sans", sans-serif;
  font-size: 11px;
  color: #000;
}

button, input, select, textarea {
  font: inherit;
  color: inherit;
  margin: 0;
  border-radius: 0;
}

button {
  padding: 0;
  border: 0;
  background: none;
}

a {
  color: inherit;
  text-decoration: none;
}

svg {
  flex: none;
  fill: none;
  stroke: currentColor;
}

.sprite {
  position: absolute;
  width: 0;
  height: 0;
}

.desktop {
  position: relative;
  height: 100vh;
  overflow: hidden;
  background: radial-gradient(circle at 88% 55%, #00488c 0%, #003a74 20%, #00264e 48%, #001a38 75%, #001027 100%);
}

.window {
  position: absolute;
  display: flex;
  flex-direction: column;
}

.window > * {
  flex-shrink: 0;
}

.controls {
  display: flex;
  margin-left: auto;
}

.wc {
  display: flex;
  align-items: center;
  justify-content: center;
  width: 45px;
}

.wc svg {
  width: 12px;
  height: 12px;
}

.wc.off {
  opacity: .2;
}

.ar {
  width: 12px;
  height: 12px;
  stroke: #505050;
  stroke-width: 2;
}

.end {
  margin-left: auto;
}

.grow {
  flex: 1;
}

/* Notepad++ */
.npp {
  left: -8px;
  top: 556px;
  width: 992px;
  height: 334px;
  border-right: 1px solid #777;
  background: #f0f0f0;
  font-family: "Open Sans", sans-serif;
  font-size: 12px;
  color: #333;
}

.npp-title {
  height: 28px;
  padding-top: 10px;
  background: #fff;
}

.npp-icon {
  display: block;
  width: 16px;
  height: 12px;
  background: linear-gradient(#d8e8c0, #5fae1a);
}

.npp-menu {
  height: 22px;
  padding-left: 4px;
  background: #fff;
  color: #999;
}

.npp-tools {
  height: 36px;
  border-top: 14px solid #eef2ea;
  border-bottom: 6px solid #7f9fdc;
  background: #ffa030;
}

.npp-editor {
  display: flex;
  flex: 1;
  align-items: stretch;
  background: #fff;
}

.npp-gutter {
  display: flex;
  flex-direction: column;
  justify-content: flex-end;
  width: 32px;
  padding-left: 14px;
  background: #e4e4e4;
  color: #999;
  font-family: "Liberation Mono", monospace;
  font-size: 12px;
  line-height: 15px;
}

.npp-text {
  display: flex;
  flex: 1;
  flex-direction: column;
  justify-content: flex-end;
  padding-bottom: 10px;
}

.npp-current {
  height: 16px;
  background: #e8e8e8;
}

.npp-scroll {
  display: flex;
  align-items: center;
  height: 18px;
  padding-left: 6px;
  border-bottom: 2px solid #f0f0f0;
}

.npp-thumb {
  flex: 1;
  height: 16px;
  background: #cdcdcd;
}

.npp-status {
  display: flex;
  height: 25px;
  border-top: 1px solid #777;
  line-height: 24px;
}

.npp-mode {
  width: 690px;
}

.npp-pos {
  width: 163px;
  border-right: 1px solid #ddd;
}

.npp-eol {
  width: 110px;
  padding-left: 3px;
  border-right: 1px solid #ddd;
}

.npp-enc {
  overflow: hidden;
  padding-left: 3px;
}

/* Firefox */
.firefox {
  left: 640px;
  top: 0;
  width: 632px;
  height: 310px;
  background: #fff;
  color: #fbfbfe;
}

.ff-tabs {
  display: flex;
  justify-content: flex-end;
  height: 45px;
  background: #1f1e25;
}

.ff-bar {
  display: flex;
  align-items: center;
  justify-content: flex-end;
  gap: 20px;
  height: 41px;
  padding-right: 16px;
  border-bottom: 1px solid #0c0c0d;
  background: #2b2a33;
}

.ff-bar svg {
  display: block;
  width: 16px;
  height: 16px;
  stroke-width: 2;
}

.ff-account {
  position: relative;
}

.ff-account::after {
  content: "";
  position: absolute;
  right: -3px;
  top: -3px;
  width: 6px;
  height: 6px;
  border-radius: 3px;
  background: #00a8ff;
}

.ff-teal {
  height: 41px;
  background: #154354;
}

.ff-head {
  height: 54px;
  border-bottom: 6px solid #e1e5ea;
  background: #f5f5f5;
}

.ff-text {
  margin: 24px 0 0;
  padding-left: 436px;
  color: #333;
}

/* Chrome */
.chrome {
  left: 8px;
  top: 0;
  width: 1070px;
  height: 796px;
  border-right: 1px solid #888;
  border-bottom: 1px solid #777;
  background: #fff;
}

.tabs {
  display: flex;
  height: 40px;
  background: #2b2b2b;
  border-top: 1px solid #444;
  color: #c8c8c8;
}

.tab-search {
  width: 28px;
  height: 28px;
  margin: 5px 6px;
  border-radius: 8px;
  background: #3c3c3c;
}

.tab-search .ar {
  stroke: #ddd;
}

.tab {
  display: flex;
  align-items: center;
  width: 232px;
  margin-top: 5px;
  padding: 0 12px 6px 8px;
  border-radius: 10px 10px 0 0;
  background: #3c3c3c;
  font-family: "Open Sans", sans-serif;
  font-size: 11px;
  color: #e3e3e3;
}

.favicon {
  width: 16px;
  height: 16px;
  margin-right: 8px;
  color: #000;
}

.tab-name {
  flex: 1;
  overflow: hidden;
  white-space: nowrap;
}

.tab-close svg {
  display: block;
  width: 8px;
  height: 8px;
  margin-left: 16px;
  stroke-width: 2;
}

.tab-new {
  width: 38px;
  font-family: "Open Sans", sans-serif;
  font-size: 20px;
}

.tabs .controls {
  color: #888;
}

.urlbar {
  display: flex;
  align-items: center;
  height: 47px;
  padding: 0 7px 0 4px;
  border-bottom: 1px solid #555;
  background: #3c3c3c;
  font-family: "Noto Sans", sans-serif;
  color: #c7c7c7;
}

.nav {
  width: 36px;
}

.nav svg, .unsafe svg, .star, .profile {
  width: 16px;
  height: 16px;
  stroke-width: 2;
}

.nav.off {
  color: #777;
}

.url {
  display: flex;
  flex: 1;
  align-items: center;
  height: 34px;
  margin-left: 8px;
  padding: 0 17px 0 5px;
  border-radius: 17px;
  background: #282828;
}

.unsafe {
  display: flex;
  align-items: center;
  gap: 4px;
  height: 24px;
  padding: 0 6px 0 4px;
  border-radius: 12px;
  background: #3c3c3c;
  font-weight: 600;
  font-size: 12px;
  color: #e3e3e3;
}

.unsafe svg {
  stroke-width: 1;
}

.address {
  flex: 1;
  padding-left: 7px;
  font-size: 13px;
  white-space: nowrap;
}

.address b {
  font-weight: 400;
  color: #fff;
}

.star {
  stroke-width: 1;
}

.profile {
  margin: 0 14px 0 18px;
  stroke-width: 1;
}

.erro {
  width: 66px;
  height: 34px;
  border-radius: 17px;
  background: #004a77;
  font-size: 12px;
  color: #c2e7ff;
}

.erro span {
  padding-left: 6px;
  font-weight: 700;
  font-size: 14px;
}

/* TOTVS menu */
.totvs-bar {
  display: flex;
  height: 40px;
  background: #154354;
  color: #fff;
  font-family: "Liberation Sans", sans-serif;
}

.totvs-logo {
  width: 40px;
  height: 40px;
  padding: 9px;
  border-right: 1px solid #0a2a38;
}

.ttab {
  display: flex;
  align-items: center;
  position: relative;
  width: 200px;
  padding: 0 12px 0 11px;
  border-right: 1px solid #0a2a38;
  font-size: 14px;
}

.ttab span {
  width: 139px;
  overflow: hidden;
  white-space: nowrap;
}

.ttab button {
  width: 12px;
  margin-left: 23px;
}

.ttab.active {
  background: linear-gradient(#0b2836, #30566b);
}

.ttab.active::after {
  content: "";
  position: absolute;
  left: 92px;
  bottom: 0;
  border: 7px solid transparent;
  border-top: 0;
  border-bottom-color: #eee;
}

.tbuttons {
  display: flex;
  margin-left: auto;
}

.tbuttons button {
  display: flex;
  align-items: center;
  justify-content: center;
  width: 40px;
  border-left: 1px solid #0a2a38;
}

.tbuttons svg {
  width: 16px;
  height: 16px;
  stroke-width: 2;
}

.tbuttons .signal {
  gap: 4px;
  color: #0c0;
  font-size: 10px;
}

.tbuttons .signal svg {
  width: 14px;
  height: 14px;
  stroke: none;
}

.totvs-head {
  display: flex;
  height: 39px;
  border-bottom: 1px solid #999;
  background: linear-gradient(#ebebeb, #fff);
  font-family: "Liberation Sans", sans-serif;
  font-size: 11px;
  color: #777;
}

.brand {
  flex: 1;
  padding-left: 10px;
  font-weight: 400;
  font-size: 24px;
  line-height: 40px;
  color: #0c9abe;
}

.hcell {
  padding: 0 10px;
  border-left: 1px solid #ddd;
  line-height: 34px;
}

.hcell:last-child {
  line-height: 36px;
}

.crumb {
  display: flex;
  height: 41px;
  background: #f1f1f1;
  font-family: Lato, sans-serif;
  font-size: 14px;
  line-height: 40px;
  color: #29b6c5;
}

.burger {
  display: flex;
  flex-direction: column;
  align-items: flex-end;
  gap: 5px;
  width: 44px;
  padding: 10px 4px 0 0;
  background: #fff;
}

.burger i {
  width: 19px;
  height: 2px;
  background: #045b8f;
}

.crumb span {
  padding-left: 24px;
}

.page {
  padding: 11px 28px 0 16px;
  font-family: Lato, sans-serif;
}

.page h1 {
  margin: 0 0 5px;
  font-weight: 600;
  font-size: 23px;
  line-height: 32px;
  color: #4a5c60;
}

.actions {
  display: flex;
  align-items: center;
  gap: 4px;
  height: 44px;
}

.po {
  height: 44px;
  padding: 0 17px;
  border: 2px solid #045b8f;
  border-radius: 4px;
  font-weight: 700;
  font-size: 16px;
  color: #045b8f;
}

.po.disabled {
  border-color: #b2b2b2;
  color: #b2b2b2;
}

.po.faturar {
  border-color: #b2b2b2;
  background: #b2b2b2;
  color: #555;
}

.po svg {
  width: 12px;
  height: 14px;
  margin-right: 6px;
  stroke-width: 2;
  vertical-align: -1px;
}

.search-box {
  display: flex;
  align-items: center;
  width: 224px;
  height: 44px;
  margin-left: auto;
  padding: 0 10px 0 8px;
  border: 1px solid #4a5c60;
  border-radius: 4px;
  background: #f1f1f1;
}

.search-box input {
  flex: 1;
  min-width: 0;
  padding: 0;
  border: 0;
  background: none;
  font-size: 16px;
}

.search-box input::placeholder {
  color: #b0b0b0;
}

.search-box .ic {
  display: block;
  color: #045b8f;
}

.advanced {
  width: 70px;
  margin: 0 -16px 0 8px;
  font-weight: 700;
  font-size: 14px;
  line-height: 24px;
  color: #045b8f;
}

.chips {
  display: flex;
  gap: 8px;
  height: 59px;
  margin-top: 8px;
  padding: 17px 16px;
  border: 1px solid #e2e2e2;
  border-radius: 4px;
}

.chip {
  width: 240px;
  height: 24px;
  padding: 0 8px;
  border: 1px solid #66bdf0;
  border-radius: 12px;
  background: #b3e0fb;
  font-size: 14px;
  line-height: 22px;
  white-space: nowrap;
  color: #333;
}

.orders-wrap {
  height: 412px;
  margin-top: 16px;
  padding-top: 16px;
  border-left: 1px solid #bbb;
}

.orders {
  width: 100%;
  border-collapse: collapse;
  table-layout: fixed;
  font-size: 16px;
}

.orders td {
  height: 58px;
  padding: 0;
}

.orders tr:nth-child(odd) {
  background: #f1f1f1;
}

.orders a {
  font-weight: 700;
  text-decoration: underline;
  color: #045b8f;
}

.orders input {
  display: block;
  appearance: none;
  width: 24px;
  height: 24px;
  margin-left: 16px;
  border: 2px solid #4a5c60;
  border-radius: 4px;
  background: #fff;
}

.o1 { width: 72px; }
.o2 { width: 70px; }
.o3 { width: 145px; }
.o4 { width: 190px; }
.o5 { width: 124px; }
.o6 { width: 122px; }

.pill {
  display: flex;
  align-items: center;
  justify-content: center;
  width: 38px;
  height: 24px;
  border-radius: 12px;
  background: #e2e8f7;
  color: #0b4a86;
}

.pill .ic {
  width: 16px;
  height: 16px;
}

/* ERP windows */
.erp {
  border: 1px solid #999;
  background: #f8fafd;
}

.title {
  display: flex;
  align-items: center;
  height: 23px;
  padding-left: 2px;
  background: #fff;
  color: #8c8c8c;
  font-family: "Open Sans", sans-serif;
  font-size: 11px;
}

.title > span {
  padding-left: 5px;
  white-space: nowrap;
}

.title .controls {
  align-self: stretch;
}

.mark {
  width: 16px;
  height: 16px;
  color: #000;
}

.menu {
  display: flex;
  align-items: center;
  gap: 15px;
  height: 23px;
  padding-left: 7px;
  border-bottom: 2px solid #f0f0f0;
  background: #fff;
  font-family: "Open Sans", sans-serif;
  font-size: 11px;
  color: #6d6d6d;
}

.toolbar {
  display: flex;
  align-items: center;
  height: 34px;
  margin-right: 3px;
  padding: 0 2px 0 3px;
  border: 1px solid #ccc;
  border-left: 0;
  background: #17465a;
  color: #f3eecb;
}

.toolbar button {
  display: flex;
  align-items: center;
  justify-content: center;
  width: 28px;
  height: 30px;
}

.ic {
  width: 22px;
  height: 22px;
  stroke-width: 2;
}

.toolbar .off {
  color: #8b9080;
}

.toolbar .pressed {
  border: 1px solid #fff;
  background: #dfdfdf;
  color: #17465a;
}

.gap-s { width: 10px; }
.gap-x { width: 6px; }
.gap-d { width: 14px; }
.gap-l { width: 24px; }
.gap-m { width: 28px; }
.push { flex: 1; }

.panel {
  border: 1px solid #d2d4d6;
}

.fld, .fl {
  height: 21px;
  padding: 0 2px;
  border: 1px solid #c8c8c8;
  background: #f8fafd;
}

.fl {
  height: 19px;
  background: #f0f0f0;
}

.sel {
  display: block;
  appearance: none;
  height: 21px;
  padding: 0 3px;
  border: 1px solid #bfbfbf;
  background: #ccc url("data:image/svg+xml,%3Csvg xmlns='http://www.w3.org/2000/svg' width='12' height='12'%3E%3Cpath d='M2 4l4 4 4-4' fill='none' stroke='%23999'/%3E%3C/svg%3E") no-repeat right 3px center;
  color: #777;
  opacity: 1;
}

.w42 { width: 42px; }
.w56 { width: 56px; }
.w60 { width: 60px; }
.w68 { width: 68px; }
.w72 { width: 72px; }
.w75 { width: 75px; }
.w82 { width: 82px; }
.w98 { width: 98px; }
.w112 { width: 112px; }
.w118 { width: 118px; }
.w120 { width: 120px; }
.w126 { width: 126px; }
.w154 { width: 154px; }
.w232 { width: 232px; }

.chk {
  display: flex;
  align-items: center;
  gap: 3px;
  color: #777;
}

.chk input {
  appearance: none;
  position: relative;
  width: 13px;
  height: 13px;
  border: 1px solid #c0c0c0;
  background: #fff;
}

.chk input::after {
  content: "";
  position: absolute;
  left: 3px;
  top: 0;
  width: 4px;
  height: 8px;
  border: solid #b0b0b0;
  border-width: 0 1px 1px 0;
  transform: rotate(40deg);
}

.folder-tabs {
  display: flex;
  padding-left: 3px;
}

.folder-tabs button {
  width: 73px;
  height: 22px;
  padding: 0 0 0 4px;
  border-bottom: 4px solid transparent;
  text-align: left;
  font-family: "Liberation Sans", sans-serif;
  background: linear-gradient(#d2d4d6, #d2d4d6) no-repeat right top / 1px 16px;
}

.folder-tabs button.on {
  border-bottom-color: #00a2e8;
}

/* CD0606 */
.cd0606 {
  left: 1082px;
  top: 87px;
  width: 633px;
  height: 300px;
}

.cd0606 .body {
  padding: 4px 9px 0 6px;
}

.key {
  display: flex;
  align-items: center;
  gap: 1px;
  height: 42px;
  padding: 0 7px 0 6px;
}

.key label {
  margin-right: 1px;
}

.key .tipo {
  margin-left: 10px;
}

.geral {
  height: 120px;
  padding: 8px 15px 0 10px;
}

.inner {
  height: 110px;
  padding-top: 9px;
}

.inner .chk {
  padding-left: 174px;
}

.line {
  display: flex;
  align-items: center;
  margin-top: 4px;
}

.line label {
  width: 171px;
  margin-right: 2px;
  text-align: right;
}

/* CD0904A */
.cd0904 {
  left: 925px;
  top: 298px;
  width: 632px;
  height: 520px;
}

.cd0904 .title {
  height: 29px;
  padding-left: 7px;
}

.cd0904 .menu {
  height: 27px;
  border-bottom-width: 6px;
}

.cd0904 .toolbar {
  padding-left: 6px;
}

.cd0904 .body {
  flex: 1;
  padding: 6px 1px;
}

.fill {
  height: 100%;
}

/* FT0909 */
.ft0909 {
  left: 984px;
  right: -8px;
  top: 330px;
  height: 737px;
}

.ft0909 .title {
  height: 24px;
}

.ft0909 .menu {
  height: 27px;
  border-bottom-width: 7px;
}

.ft0909 .toolbar {
  padding: 0 6px 0 7px;
  margin: 0 0 0 1px;
}

.ft0909 .body {
  flex: 1;
  padding: 6px 0 0 8px;
}

.consulta {
  width: 230px;
  height: 80px;
  margin: 0 0 6px;
  padding: 10px 0 0 23px;
  border: 1px solid #d2d4d6;
}

.consulta legend {
  margin-left: -7px;
  padding: 0 14px 0 0;
}

.consulta label {
  display: flex;
  align-items: center;
  gap: 3px;
}

.consulta input {
  width: 13px;
  height: 13px;
  accent-color: #333;
}

.notas {
  height: 348px;
  padding: 42px 11px 0 4px;
}

.notas-in {
  height: 292px;
  padding: 4px 6px;
}

.panel.dark {
  height: 282px;
  padding: 7px 5px;
  border-color: #555;
}

.browse {
  display: grid;
  grid-template-columns: 1fr 16px;
  border: 1px solid #a0a0a0;
  background: #fff;
}

.grid {
  width: 100%;
  border-spacing: 0;
  table-layout: fixed;
  font-family: "DejaVu Sans", sans-serif;
}

.grid th {
  height: 17px;
  padding: 0 0 0 1px;
  border-right: 1px solid #ddd;
  font-family: "DejaVu Sans Condensed", sans-serif;
  font-weight: 400;
  text-align: left;
  white-space: nowrap;
}

.grid td {
  height: 18px;
  padding: 0 0 0 2px;
  border-right: 1px solid #bbb;
  border-bottom: 1px solid #bbb;
  line-height: 15px;
  white-space: nowrap;
}

.grid tr:last-child td {
  border-bottom: 0;
}

.grid th:last-child, .grid td:last-child {
  border-right: 0;
}

.grid .num {
  padding: 0 1px;
  text-align: right;
}

.cur {
  background: #e3e3e3;
}

.focus td {
  border-top: 1px dotted #000;
  border-bottom: 1px dotted #000;
}

.red {
  color: #f00;
}

.f1 { width: 116px; }
.f2 { width: 67px; }
.f3 { width: 109px; }
.f4 { width: 70px; }
.f5 { width: 16px; }

.ft-grid td:last-child {
  border-bottom: 0;
  background: #fff;
}

.vs {
  display: flex;
  flex-direction: column;
  align-items: center;
  padding: 2px 0;
  background: #f0f0f0;
}

.vs .end {
  margin: auto 0 0;
}

.th {
  display: block;
  width: 17px;
  height: 15px;
  background: #cdcdcd;
}

.vs .th {
  width: 15px;
  margin-top: 3px;
}

.vs .ft-th {
  height: 166px;
  margin-top: 17px;
}

.vs .msg-th { height: 38px; }
.vs .ba-th { height: 140px; }

.hs {
  grid-column: 1 / 3;
  display: flex;
  align-items: center;
  gap: 4px;
  height: 16px;
  padding: 0 19px 0 2px;
  background: #f0f0f0;
}

.ft-buttons {
  display: flex;
  align-items: center;
  justify-content: flex-end;
  gap: 3px;
  margin-top: 9px;
}

.ft-buttons button {
  height: 21px;
  border: 1px solid #adadad;
  background: #e1e1e1;
}

.ft-buttons label {
  padding: 0 0 2px 4px;
}

.msgs {
  height: 169px;
  margin-top: 12px;
  padding: 41px 18px 0 12px;
}

.msgs .dark {
  height: 120px;
  padding: 10px 5px 0 7px;
}

.m1 { width: 245px; }

.msg-grid th {
  height: 18px;
}

.short td {
  height: 14px;
}

.msg-hs .th {
  margin-right: 164px;
}

.ft-status, .pd-status {
  height: 26px;
  padding-left: 8px;
  background: #f0f0f0;
  font-family: "Liberation Sans", sans-serif;
  font-size: 13px;
  line-height: 26px;
}

/* CD0388 */
.cd0388 {
  left: 790px;
  top: 452px;
  width: 642px;
  height: 419px;
  border-color: #0078d7;
  background: #f0f0f0;
}

.cd0388 .title {
  height: 25px;
  background: #0078d7;
  color: #fff;
}

.cd0388 .menu {
  height: 21px;
  color: #000;
}

.cd0388 .toolbar {
  margin: 0 12px 0 1px;
  padding-left: 6px;
}

.cd0388 .body {
  margin-right: 10px;
  padding: 12px 3px 0 0;
  background: #f8fafd;
}

.folder-tabs.wide {
  padding-left: 2px;
}

.folder-tabs.wide button {
  width: 110px;
  padding: 0 0 0 8px;
  font-family: inherit;
}

.extratores {
  height: 267px;
  padding: 14px 10px 0 6px;
}

.ba-grid td {
  height: 17px;
}

.b1 { width: 53px; }
.b3 { width: 94px; }
.b4 { width: 74px; }
.b5 { width: 92px; }
.b6 { width: 78px; }
.b7 { width: 4px; }

.ba-status {
  height: 26px;
  margin-top: auto;
  border-top: 1px solid #d2d4d6;
}

/* PD4000 */
.pd4000 {
  left: 44px;
  top: 584px;
  width: 638px;
  height: 468px;
}

.pd4000 .toolbar {
  height: 33px;
  padding-right: 8px;
}

.pd-body {
  display: flex;
  flex: 1;
  gap: 4px;
  padding: 2px 10px 0 0;
  font-family: "Liberation Sans", sans-serif;
}

.pd-left {
  width: 197px;
}

.pd-tree {
  height: 323px;
  margin: 0 0 2px;
  padding: 3px 0 0 3px;
  border: 1px solid #777;
  border-left: 0;
  background: #fff;
  list-style: none;
}

.pd-tree li {
  display: flex;
  align-items: center;
  gap: 2px;
  height: 17px;
}

.pd-tree .l2 { padding-left: 17px; }
.pd-tree .l3 { padding-left: 49px; }
.pd-tree .leaf { padding-left: 15px; }

.pd-tree mark {
  padding: 2px 1px;
  background: #000080;
  color: #fff;
}

.box {
  width: 9px;
  height: 9px;
  margin-right: 4px;
  border: 1px solid #848484;
  font-size: 9px;
  font-style: normal;
  line-height: 7px;
  text-align: center;
}

.fo {
  width: 16px;
  height: 14px;
  stroke: none;
}

.comp {
  appearance: none;
  width: 100%;
  height: 21px;
  padding: 0 2px;
  border: 1px solid #adadad;
  background: #e1e1e1 url("data:image/svg+xml,%3Csvg xmlns='http://www.w3.org/2000/svg' width='12' height='12'%3E%3Cpath d='M2 4l4 4 4-4' fill='none' stroke='%23444'/%3E%3C/svg%3E") no-repeat right 2px center;
  font-family: "DejaVu Sans Condensed", sans-serif;
}

.pd-form {
  flex: 1;
  padding-top: 4px;
}

.pd-key {
  display: flex;
  align-items: center;
  gap: 3px;
  height: 32px;
  margin-bottom: 4px;
  padding: 0 12px 0 0;
  font-family: "DejaVu Sans Condensed", sans-serif;
}

.pd-key .l {
  width: 78px;
  text-align: right;
}

.r {
  margin-left: auto;
}

.box3d {
  display: flex;
  flex-direction: column;
  gap: 2px;
  margin-bottom: 1px;
  padding: 3px 2px;
  border: 1px solid #a0a0a0;
  background: #f0f0f0;
}

.box3d.tight {
  gap: 1px;
  padding: 1px 2px;
}

.row {
  display: flex;
  align-items: center;
  gap: 3px;
  min-height: 19px;
}

.row label {
  white-space: nowrap;
}

.row .l {
  width: 85px;
  text-align: right;
}

.row .w232 {
  margin-left: -2px;
}

.rc {
  display: flex;
  width: 124px;
}

.rc.wide {
  width: 154px;
}

.obs {
  display: block;
  height: 13px;
  line-height: 13px;
  background: #f0f0f0;
}

.obs-box {
  display: flex;
  height: 41px;
  border: 1px solid #c8c8c8;
  background: #f0f0f0;
}

.obs-box textarea {
  flex: 1;
  border: 0;
  background: none;
  resize: none;
}

.obs-sc {
  display: flex;
  flex-direction: column;
  justify-content: space-between;
  padding: 4px 3px;
  border-left: 1px solid #fff;
  opacity: .4;
}

.pd-buttons {
  display: flex;
  gap: 6px;
  margin-top: 2px;
}

.pd-buttons .box3d {
  flex-direction: row;
  gap: 2px;
  padding: 4px 6px;
}

.pd-buttons button {
  display: flex;
  align-items: center;
  justify-content: center;
  width: 26px;
  height: 23px;
  border: 1px solid #adadad;
  background: #e1e1e1;
  color: #17465a;
}

.pd-buttons button.off {
  background: #ccc;
  color: #9a9a80;
}

.pd-buttons .ic {
  width: 20px;
  height: 20px;
}

.pd-status {
  border-top: 1px solid #d2d4d6;
}

/* Taskbar */
.taskbar {
  position: absolute;
  left: 0;
  right: 0;
  bottom: 0;
  display: flex;
  height: 40px;
  background: rgba(0, 34, 64, .86);
  color: #fff;
}

.taskbar button {
  display: flex;
  align-items: center;
  justify-content: center;
  width: 48px;
}

.apps {
  display: flex;
  margin-left: 2px;
}

.taskbar .apps button {
  width: 49px;
}

.taskbar .open {
  border-bottom: 2px solid #8cc4f0;
  border-left: 4px solid transparent;
  border-right: 4px solid transparent;
}

.taskbar .active {
  border-left: 0;
  border-right: 0;
  background: #0a5596;
}

.taskbar svg {
  stroke: none;
}

.taskbar .line-ic {
  stroke: #fff;
}

.tray {
  display: flex;
  align-items: center;
  gap: 8px;
  margin-left: auto;
  padding-right: 20px;
}

.tray-text {
  padding-left: 2px;
  font-family: "Open Sans", sans-serif;
  font-size: 11px;
  line-height: 17px;
  text-align: center;
}

.clock {
  padding-right: 10px;
}

.notify {
  position: relative;
  padding-right: 4px;
}

.notify b {
  position: absolute;
  left: 8px;
  top: 7px;
  width: 16px;
  height: 16px;
  border: 1px solid #4aa0e0;
  border-radius: 8px;
  background: #0a4a80;
  font-size: 10px;
  line-height: 14px;
  text-align: center;
}
```
